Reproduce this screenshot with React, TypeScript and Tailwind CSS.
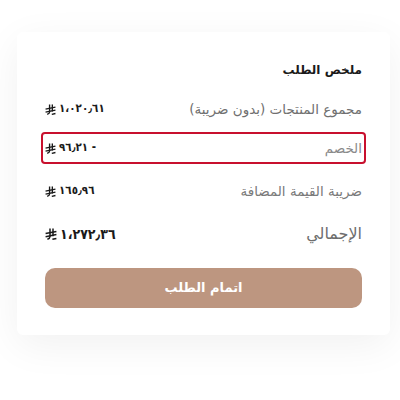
import React from "react";

function Riyal({ className = "" }: { className?: string }) {
  return (
    <svg viewBox="0 0 12 12" className={className} fill="none" stroke="currentColor" strokeWidth="1.5" strokeLinecap="butt">
      <path d="M5 0.5 V8.6 Q5 10.4 2.4 11.3" />
      <path d="M8 0.5 V8.2" />
      <path d="M0.6 5.6 L11.4 3.4" />
      <path d="M0.6 8.8 L11.4 6.6" />
      <path d="M7.4 11.3 L11.4 10.4" />
    </svg>
  );
}

function Amount({ value, big = false }: { value: string; big?: boolean }) {
  return (
    <div
      className={`flex items-center gap-[3px] text-[#1a1a1a] ${big ? "text-[14px] font-bold" : "text-[11.5px] font-semibold"}`}
      dir="ltr"
      style={{ fontFamily: '"DejaVu Sans Condensed", "DejaVu Sans", sans-serif' }}
    >
      <Riyal className={big ? "w-[12px] h-[12px]" : "w-[11px] h-[11px]"} />
      <span>{value}</span>
    </div>
  );
}

export default function App() {
  return (
    <div className="w-[400px] h-[400px] bg-white pt-[32px] pl-[17px]" style={{ fontFamily: '"DejaVu Sans", sans-serif' }}>
      <div className="w-[373px] h-[303px] bg-white rounded-[6px] shadow-[0_10px_40px_rgba(0,0,0,0.06)] px-[24px] pt-[26px]" dir="rtl">
        <div className="px-[4px] text-[12px] font-bold text-[#1a1a1a] h-[24px] flex items-center">ملخص الطلب</div>
        <div className="mt-[15px] px-[4px] h-[24px] flex items-center justify-between">
          <span className="text-[13.5px] text-[#707070]">مجموع المنتجات (بدون ضريبة)</span>
          <Amount value="١،٠٢٠٫٦١" />
        </div>
        <div className="mt-[11px] h-[32px] border-2 border-[#c8102e] rounded-[4px] px-[2px] flex items-center justify-between">
          <span className="text-[13.5px] text-[#8a8a8a]">الخصم</span>
          <Amount value="٩٦٫٢١ -" />
        </div>
        <div className="mt-[15px] px-[4px] h-[24px] flex items-center justify-between">
          <span className="text-[13.5px] text-[#7a7a7a]">ضريبة القيمة المضافة</span>
          <Amount value="١٦٥٫٩٦" />
        </div>
        <div className="mt-[18px] px-[4px] h-[26px] flex items-center justify-between">
          <span className="text-[16px] text-[#6e6e6e]">الإجمالي</span>
          <Amount value="١،٢٧٢٫٣٦" big />
        </div>
        <div className="px-[4px]">
          <button className="mt-[21px] w-full h-[40px] rounded-[10px] bg-[#bd9680] text-white text-[13px] font-bold flex items-center justify-center">
            اتمام الطلب
          </button>
        </div>
      </div>
    </div>
  );
}
